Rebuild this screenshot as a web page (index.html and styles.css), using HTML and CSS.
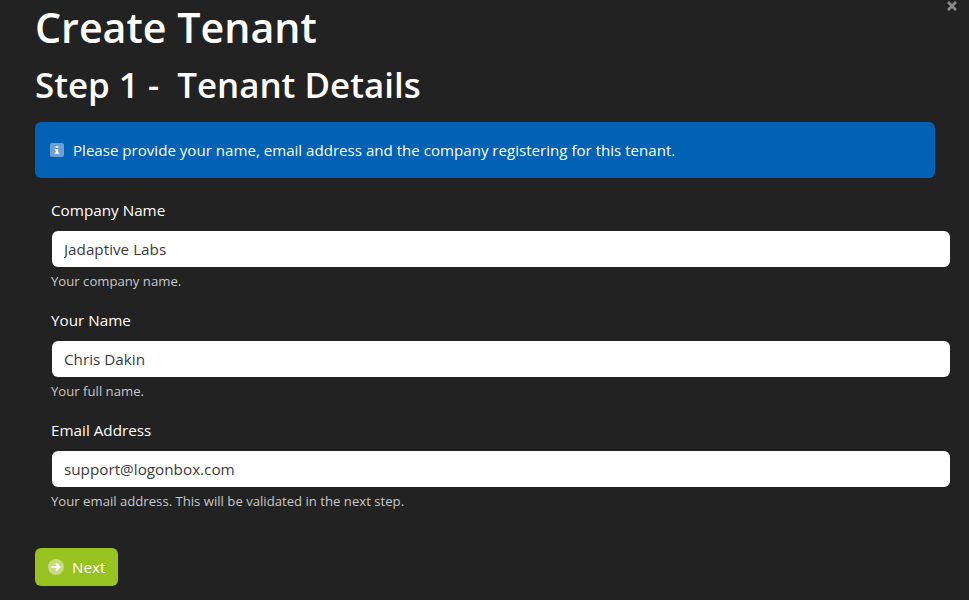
FILE: index.html
```html
<!DOCTYPE html>
<html lang="en">
<head>
    <meta charset="UTF-8">
    <meta name="viewport" content="width=device-width, initial-scale=1.0">
    <title>Create Tenant</title>
    <link rel="stylesheet" href="styles.css">
</head>
<body>
    <button class="close-btn" type="button" aria-label="Close">
        <svg viewBox="0 0 12 12" width="12" height="12"><path d="M2 2l8 8M10 2l-8 8" stroke="#8a8a8a" stroke-width="2.6" fill="none"/></svg>
    </button>
    <div class="page">
        <h1 class="title">Create Tenant</h1>
        <h2 class="subtitle">Step 1 -&nbsp; Tenant Details</h2>

        <div class="alert">
            <svg class="alert-icon" viewBox="0 0 14 14" width="14" height="14">
                <rect width="14" height="14" rx="2" fill="#6c9fd3"/>
                <path d="M5.6 3h2.6v2H5.6zM5 6h3.2v3.6H9.2V11H4.8V9.6h1V7.4H5z" fill="#fff"/>
            </svg>
            <span>Please provide your name, email address and the company registering for this tenant.</span>
        </div>

        <form class="form">
            <div class="field">
                <label class="field-label" for="company">Company Name</label>
                <input class="field-input" id="company" type="text" value="Jadaptive Labs">
                <div class="field-help">Your company name.</div>
            </div>
            <div class="field">
                <label class="field-label" for="name">Your Name</label>
                <input class="field-input" id="name" type="text" value="Chris Dakin">
                <div class="field-help">Your full name.</div>
            </div>
            <div class="field">
                <label class="field-label" for="email">Email Address</label>
                <input class="field-input" id="email" type="text" value="support@logonbox.com">
                <div class="field-help">Your email address. This will be validated in the next step.</div>
            </div>
        </form>

        <button class="next-btn" type="button">
            <svg viewBox="0 0 16 16" width="16" height="16">
                <circle cx="8" cy="8" r="8" fill="#c6dc84"/>
                <path d="M3.6 8h7.6M8 4.6L11.4 8 8 11.4" stroke="#fff" stroke-width="2" fill="none"/>
            </svg>
            <span>Next</span>
        </button>
    </div>
</body>
</html>
```

FILE: styles.css
```css
html, body {
    margin: 0;
    height: 100%;
}

body {
    background: #222222;
    color: #ffffff;
    font-family: "Open Sans", "Noto Sans", "Liberation Sans", sans-serif;
    font-size: 15.1px;
    overflow: hidden;
}

.page {
    width: 900px;
    margin-left: 35px;
}

.title {
    margin: 0 0 4px;
    font-size: 41.2px;
    font-weight: 600;
    line-height: 54px;
}

.subtitle {
    margin: 0 0 10px;
    font-size: 34.9px;
    font-weight: 600;
    line-height: 54px;
}

.alert {
    display: flex;
    align-items: center;
    gap: 9px;
    height: 56px;
    padding-left: 15px;
    background: #0061b5;
    border-radius: 6px;
}

.form {
    margin: 20px -15px 0 16px;
}

.field {
    margin-bottom: 17px;
}

.field-label {
    display: block;
    font-size: 15.25px;
    line-height: 24px;
    margin-bottom: 9px;
}

.field-input {
    display: block;
    box-sizing: border-box;
    width: calc(100% - 1px);
    height: 36px;
    padding: 0 12px;
    margin-left: 1px;
    border: 0;
    border-radius: 6px;
    background: #ffffff;
    color: #3c3c3c;
    font: inherit;
    font-size: 15.25px;
}

.field-help {
    margin-top: 4px;
    font-size: 13.15px;
    line-height: 20px;
    color: #c8c8c8;
}

.next-btn {
    display: flex;
    align-items: center;
    gap: 8px;
    height: 38px;
    margin-top: 37px;
    padding: 0 13px;
    border: 0;
    border-radius: 6px;
    background: #98c21f;
    color: #ffffff;
    font: inherit;
    font-size: 15.25px;
}

.close-btn {
    position: absolute;
    top: 0;
    right: 11px;
    padding: 0;
    border: 0;
    background: none;
    line-height: 0;
}
```
